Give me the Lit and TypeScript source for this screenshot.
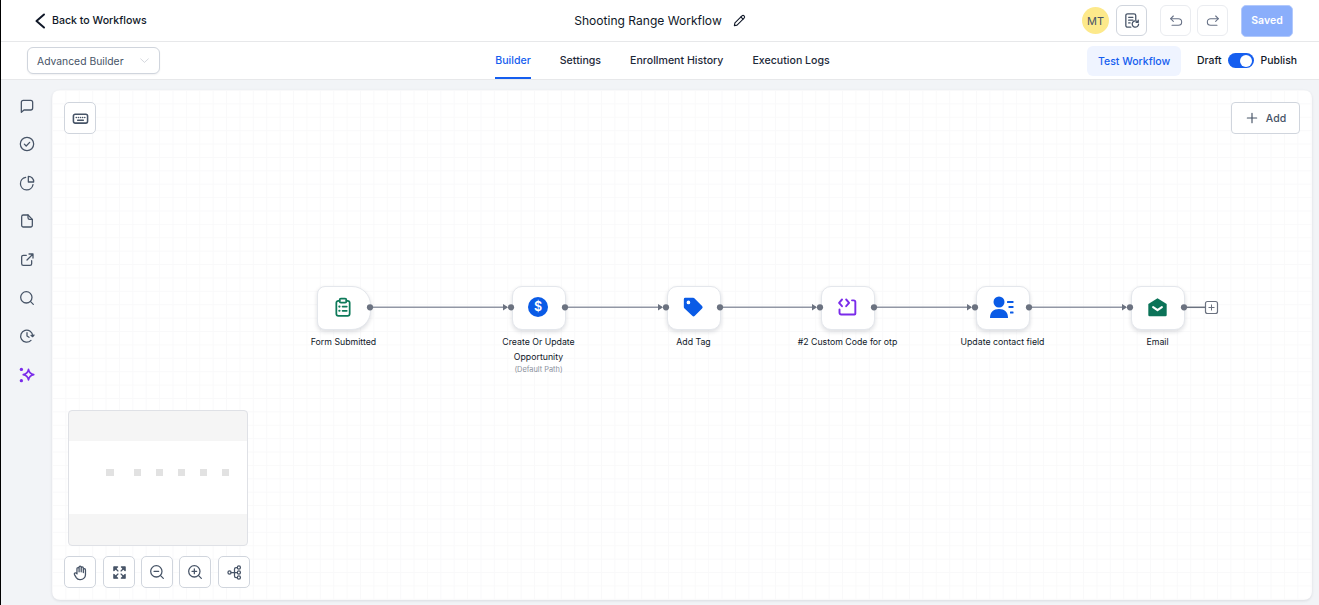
import { LitElement, html, css, svg } from "lit";
import { customElement } from "lit/decorators.js";

const ic = (body: unknown, size = 16, sw = 2) => html`<svg width=${size} height=${size} viewBox="0 0 24 24" fill="none" stroke="currentColor" stroke-width=${sw} stroke-linecap="round" stroke-linejoin="round">${body}</svg>`;

const side = [
  svg`<path d="M3.500 6.500a3 3 0 0 1 3-3h11a3 3 0 0 1 3 3v8.500a3 3 0 0 1-3 3H7.500L3.500 21.500z"/>`,
  svg`<circle cx="12" cy="12" r="10"/><path d="M8 12.200l2.800 2.800L16 9.500"/>`,
  svg`<path d="M10 3.500A9.500 9.500 0 1 0 21 14.500"/><path d="M14 2a8 8 0 0 1 8 8.500h-8z"/>`,
  svg`<path d="M13.500 3H6.500A2.500 2.500 0 0 0 4 5.500v13A2.500 2.500 0 0 0 6.500 21h11a2.500 2.500 0 0 0 2.500-2.500V9.500z"/><path d="M13.500 3v4a2.500 2.500 0 0 0 2.500 2.500h4"/>`,
  svg`<path d="M11 5H6.500A2.500 2.500 0 0 0 4 7.500v10A2.500 2.500 0 0 0 6.500 20h10a2.500 2.500 0 0 0 2.500-2.500V13"/><path d="M12 12l9-9M15 3h6v6"/>`,
  svg`<circle cx="11" cy="11" r="8.500"/><path d="M21.500 21.500l-4.500-4.500"/>`,
  svg`<path d="M20.500 12a9 9 0 1 0-2.500 6.500"/><path d="M12 7v5l3 2"/><path d="M22.500 10.500l-2 2.500-2.500-2"/>`,
];

const sparkle = html`<svg width="18" height="18" viewBox="0 0 24 24" fill="none" stroke="#7a2bea" stroke-width="2.200" stroke-linejoin="round"><path d="M14 4.500c.8 4.300 2.700 6.200 7 7-4.300.8-6.200 2.700-7 7-.8-4.300-2.700-6.200-7-7 4.300-.8 6.200-2.700 7-7z"/><circle cx="4.500" cy="4.500" r="2.200" fill="#7a2bea" stroke="none"/><circle cx="4.500" cy="19.500" r="2.200" fill="#7a2bea" stroke="none"/></svg>`;

const clipboard = html`<svg width="20" height="20" viewBox="0 0 24 24" fill="none" stroke="#0e7a5a" stroke-width="2.100" stroke-linejoin="round" stroke-linecap="round"><path d="M8 4.500H6.500A2.500 2.500 0 0 0 4 7v13a2.500 2.500 0 0 0 2.500 2.500h11A2.500 2.500 0 0 0 20 20V7a2.500 2.500 0 0 0-2.500-2.500H16"/><rect x="8" y="1.800" width="8" height="5" rx="1.500"/><path d="M11.500 11.500H16.500M11.500 16.500H16.500"/><path d="M7.600 11.500h.2M7.600 16.500h.2" stroke-width="2.600"/></svg>`;
const dollar = html`<span class="dollar">$</span>`;
const tag = html`<svg width="22" height="22" viewBox="0 0 24 24"><path fill="#0a5be6" fill-rule="evenodd" d="M2 3.500A1.500 1.500 0 0 1 3.500 2h8.700c.5 0 1 .2 1.300.5l8.400 8.400a2 2 0 0 1 0 2.800l-7.900 7.900a2 2 0 0 1-2.800 0L2.500 13.300c-.3-.3-.5-.8-.5-1.300zM7 5a2 2 0 1 0 0 4 2 2 0 0 0 0-4z"/></svg>`;
const code = html`<svg width="20" height="20" viewBox="0 0 24 24" fill="none" stroke="#7a2bea" stroke-width="2.300" stroke-linecap="round" stroke-linejoin="round"><path d="M6 3L2.500 7 6 11M11 3l3.500 4L11 11"/><path d="M18 4h2a2 2 0 0 1 2 2v14a1 1 0 0 1-1 1H5a2 2 0 0 1-2-2v-4"/></svg>`;
const contact = html`<svg width="24" height="24" viewBox="0 0 24 24" fill="#0a5be6"><circle cx="9" cy="7" r="5.500"/><path d="M0 23c0-6 3.500-9 9-9s9 3 9 9z"/><rect x="17" y="6" width="6.500" height="2" rx=".5"/><rect x="18.500" y="11" width="5" height="2" rx=".5"/><rect x="20" y="16.500" width="3.500" height="2" rx=".5"/></svg>`;
const mail = html`<svg width="21" height="21" viewBox="0 0 24 24"><path fill="#0b7358" d="M12 1.500 22.500 8v12.500a1.500 1.500 0 0 1-1.500 1.500H3a1.500 1.500 0 0 1-1.500-1.500V8z"/><path fill="none" stroke="#fff" stroke-width="2.400" stroke-linecap="round" stroke-linejoin="round" d="M7 11.500l5 3.500 5-3.500"/></svg>`;

type N = { x: number; icon: unknown; label: string[]; sub?: string; first?: boolean };
const nodes: N[] = [
  { x: 265, icon: clipboard, label: ["Form Submitted"], first: true },
  { x: 460, icon: dollar, label: ["Create Or Update", "Opportunity"], sub: "(Default Path)" },
  { x: 615, icon: tag, label: ["Add Tag"] },
  { x: 769, icon: code, label: ["#2 Custom Code for otp"] },
  { x: 924, icon: contact, label: ["Update contact field"] },
  { x: 1079, icon: mail, label: ["Email"] },
];

const NODE_W = 54;
const CY = 217.3;

@customElement("app-root")
export class AppRoot extends LitElement {
  static styles = css`
    :host { display: flex; flex-direction: column; width: 100%; height: 100vh; overflow: hidden; background: #f2f4f7; font-family: Inter, "Liberation Sans", sans-serif; color: #101828; box-sizing: border-box; border-left: 1px solid #000; }
    * { box-sizing: border-box; }
    svg { display: block; }
    .top { height: 42px; flex: none; background: #fff; border-bottom: 1px solid #e7e8ea; display: grid; grid-template-columns: 1fr auto 1fr; align-items: center; padding: 0 26px 0 33px; }
    .back { display: flex; align-items: center; gap: 6px; font-size: 10.600px; font-weight: 500; color: #101828; }
    .title { display: flex; align-items: center; gap: 11px; font-size: 12.050px; color: #101828; margin-right: 7px; }
    .actions { display: flex; align-items: center; justify-content: flex-end; }
    .avatar { width: 27px; height: 27px; border-radius: 50%; background: #fde98b; color: #475467; font-size: 11px; display: flex; align-items: center; justify-content: center; margin-right: 7px; }
    .ib { width: 31px; height: 31px; border-radius: 6px; border: 1px solid #d0d5dd; background: #fff; display: flex; align-items: center; justify-content: center; color: #475467; }
    .ib.light { border-color: #eaecf0; color: #667085; }
    .ib.doc { margin-right: 13px; }
    .ib.undo { margin-right: 6px; }
    .saved { margin-left: 13px; width: 52px; height: 32px; border-radius: 5px; background: #8aaefb; border: 1px solid #b2c9fc; color: #fff; font-size: 10.500px; font-weight: 600; display: flex; align-items: center; justify-content: center; }
    .sub { height: 38px; flex: none; background: #fff; border-bottom: 1px solid #e7e8ea; display: grid; grid-template-columns: 1fr auto 1fr; align-items: center; padding: 0 22px 0 26px; }
    .select { width: 133px; height: 27px; border: 1px solid #d0d5dd; border-radius: 6px; box-shadow: 0 1px 2px rgba(16,24,40,.06); display: flex; align-items: center; justify-content: space-between; padding: 0 8px 0 9px; font-size: 10.350px; color: #475467; background: #fff; }
    .select svg { color: #c3c7d0; }
    .tabs { display: flex; gap: 29px; height: 37px; margin-left: 1px; }
    .tab { font-size: 10.600px; font-weight: 500; color: #1d2939; display: flex; align-items: center; border-bottom: 2px solid transparent; padding-top: 1px; }
    .tab.on { color: #155eef; border-bottom-color: #155eef; }
    .right { display: flex; align-items: center; justify-content: flex-end; }
    .test { width: 94px; height: 30px; border-radius: 6px; background: #eff4ff; color: #155eef; font-size: 10.500px; font-weight: 500; display: flex; align-items: center; justify-content: center; margin-right: 16px; padding-top: 1px; }
    .sw { font-size: 10.400px; font-weight: 500; color: #101828; }
    .toggle { width: 26px; height: 15px; border-radius: 8px; background: #155eef; margin: 0 7px 0 6px; display: flex; justify-content: flex-end; align-items: center; padding: 0 1.500px; }
    .toggle i { width: 12px; height: 12px; border-radius: 50%; background: #fff; display: block; }
    .main { flex: 1; min-height: 0; display: flex; padding: 10px 7px 5px 0; }
    .rail { width: 51px; flex: none; display: flex; flex-direction: column; align-items: center; gap: 22.400px; padding: 8px 0 0 0; color: #475467; }
    .rail svg:last-child { margin-top: -1px; }
    .canvas { flex: 1; position: relative; border-radius: 8px; background-color: #fff; background-image: linear-gradient(#f9f9fa 1px, transparent 1px), linear-gradient(90deg, #f9f9fa 1px, transparent 1px); background-size: 13.400px 13.400px; box-shadow: 0 1px 3px rgba(16,24,40,.1); overflow: hidden; }
    .edges { position: absolute; inset: 0; width: 100%; height: 100%; z-index: 2; pointer-events: none; }
    .node { position: absolute; top: 196px; width: 54px; display: flex; flex-direction: column; align-items: center; }
    .box { width: 54px; height: 44px; flex: none; background: #fff; border: 1px solid #e4e7ec; border-radius: 10px; box-shadow: 0 2px 4px rgba(16,24,40,.14); display: flex; align-items: center; justify-content: center; padding: 0 2px 2px 0; }
    .box.first { border-radius: 8px 19px 19px 8px; }
    .dollar { width: 20px; height: 20px; border-radius: 50%; background: #0a5be6; color: #fff; font-size: 12.500px; font-weight: 600; display: flex; align-items: center; justify-content: center; line-height: 1; }
    .label { margin-top: 5px; width: 140px; text-align: center; font-size: 8.750px; line-height: 15px; color: #101828; flex: none; margin-left: -1px; }
    .label div { white-space: nowrap; }
    .subl { font-size: 7.400px; line-height: 10px; color: #8a909c; }
    .tool { position: absolute; width: 32px; height: 32px; border: 1px solid #d0d5dd; border-radius: 5px; background: #fff; display: flex; align-items: center; justify-content: center; color: #475467; }
    .add { position: absolute; top: 12px; right: 12px; width: 69px; height: 32px; border: 1px solid #d0d5dd; border-radius: 4px; background: #fff; display: flex; align-items: center; justify-content: center; gap: 7px; color: #475467; font-size: 10.500px; font-weight: 500; }
    .mini { position: absolute; left: 16px; top: 320px; width: 180px; height: 136px; border: 1px solid #dfe1e6; border-radius: 4px; background: #f5f5f5; overflow: hidden; display: flex; align-items: center; }
    .view { width: 100%; height: 73px; background: #fff; display: flex; align-items: flex-start; padding: 28px 0 0 37px; margin-top: -1px; }
    .pip { width: 7px; height: 7px; background: #e2e2e2; margin-right: 15px; flex: none; }
    .pip:first-child { width: 8px; margin-right: 20px; }
  `;

  render() {
    const edges = nodes.slice(0, -1).map((n, i) => {
      const a = n.x + NODE_W - 1, b = nodes[i + 1].x;
      return svg`<path d="M${a} ${CY}H${b - 5}" stroke="#9297a5" stroke-width="1.500" fill="none"/>
        <path d="M${b - 9} ${CY - 3.300}L${b - 4} ${CY}L${b - 9} ${CY + 3.300}z" fill="#6b7280"/>
        <circle cx=${a} cy=${CY} r="3.100" fill="#6b7280"/>
        <circle cx=${b - 1} cy=${CY} r="3.100" fill="#6b7280"/>`;
    });
    return html`
      <div class="top">
        <div class="back">
          <svg width="12" height="16" viewBox="0 0 12 16" fill="none" stroke="#101828" stroke-width="2" stroke-linecap="round" stroke-linejoin="round"><path d="M10 1.500 2.500 8 10 14.500"/></svg>
          <span>Back to Workflows</span>
        </div>
        <div class="title">
          <span>Shooting Range Workflow</span>
          ${ic(svg`<path d="M16.500 3.500a2.800 2.800 0 0 1 4 4L7.500 20.500 2.500 21.500l1-5z"/><path d="M14.500 5.500l4 4"/>`, 13, 2)}
        </div>
        <div class="actions">
          <div class="avatar">MT</div>
          <div class="ib doc">${ic(svg`<path d="M11 21.500H6.500A2.500 2.500 0 0 1 4 19V5a2.500 2.500 0 0 1 2.500-2.500h9A2.500 2.500 0 0 1 18 5v6"/><path d="M8 7.500h6M8 11.500h6M8 15.500h2"/><path d="M22 17a4.500 4.500 0 1 1-1.300-3.200"/><path d="M21.500 11.500v3h-3"/>`, 17, 1.800)}</div>
          <div class="ib light undo">${ic(svg`<path d="M4 8.500h11.500a5 5 0 0 1 0 10H6"/><path d="M8 4.500l-4 4 4 4"/>`, 16, 1.600)}</div>
          <div class="ib light">${ic(svg`<path d="M20 8.500H8.500a5 5 0 0 0 0 10H18"/><path d="M16 4.500l4 4-4 4"/>`, 16, 1.600)}</div>
          <div class="saved">Saved</div>
        </div>
      </div>
      <div class="sub">
        <div>
          <div class="select"><span>Advanced Builder</span>${ic(svg`<path d="M5 9l7 6.500L19 9"/>`, 13, 1.300)}</div>
        </div>
        <div class="tabs">
          <div class="tab on">Builder</div>
          <div class="tab">Settings</div>
          <div class="tab">Enrollment History</div>
          <div class="tab">Execution Logs</div>
        </div>
        <div class="right">
          <div class="test">Test Workflow</div>
          <span class="sw">Draft</span>
          <div class="toggle"><i></i></div>
          <span class="sw">Publish</span>
        </div>
      </div>
      <div class="main">
        <div class="rail">
          ${side.map((s) => ic(s, 16, 1.900))}
          ${sparkle}
        </div>
        <div class="canvas">
          <svg class="edges">
            ${edges}
            <path d="M1132 217.300H1153" stroke="#6b7280" stroke-width="1.500"/>
            <circle cx="1132" cy="217.300" r="3.100" fill="#6b7280"/>
            <rect x="1153.500" y="211.500" width="12" height="12" rx="2" fill="#fff" stroke="#6b7280" stroke-width="1.200"/>
            <path d="M1159.500 214.500v6M1156.500 217.500h6" stroke="#6b7280" stroke-width="1"/>
          </svg>
          ${nodes.map((n) => html`
            <div class="node" style="left:${n.x}px">
              <div class="box ${n.first ? "first" : ""}">${n.icon}</div>
              <div class="label">
                ${n.label.map((l) => html`<div>${l}</div>`)}
                ${n.sub ? html`<div class="subl">${n.sub}</div>` : ""}
              </div>
            </div>`)}
          <div class="tool" style="left:12px;top:12px">
            ${ic(svg`<rect x="2" y="6" width="20" height="12.500" rx="2.500"/><path d="M6 10.500h.1M9 10.500h.1M12 10.500h.1M15 10.500h.1M18 10.500h.1M8 14.500h8"/>`, 17, 2.200)}
          </div>
          <div class="add">
            ${ic(svg`<path d="M12 4v16M4 12h16"/>`, 14, 2)}
            <span>Add</span>
          </div>
          <div class="mini">
            <div class="view">${[0, 1, 2, 3, 4, 5].map(() => html`<div class="pip"></div>`)}</div>
          </div>
          <div class="tool" style="left:12px;top:466px">
            ${ic(svg`<path d="M7 13V6.500a1.500 1.500 0 0 1 3 0V11M10 11V4.500a1.500 1.500 0 0 1 3 0V11M13 11V5.500a1.500 1.500 0 0 1 3 0V12M16 12V8a1.500 1.500 0 0 1 3 0v7a7 7 0 0 1-7 7h-1a6 6 0 0 1-5-2.700L3.500 15a1.700 1.700 0 0 1 2.700-2l1 1"/>`, 17, 1.800)}
          </div>
          <div class="tool" style="left:51px;top:466px">
            ${ic(svg`<path d="M3 9V3h6zM21 9V3h-6zM3 15v6h6zM21 15v6h-6z" fill="currentColor"/><path d="M4 4l5.500 5.500M20 4l-5.500 5.500M4 20l5.500-5.500M20 20l-5.500-5.500"/>`, 15, 2)}
          </div>
          <div class="tool" style="left:89px;top:466px">
            ${ic(svg`<circle cx="11" cy="11" r="8.500"/><path d="M21.500 21.500l-4.500-4.500M7.500 11h7"/>`, 16, 1.900)}
          </div>
          <div class="tool" style="left:127px;top:466px">
            ${ic(svg`<circle cx="11" cy="11" r="8.500"/><path d="M21.500 21.500l-4.500-4.500M7.500 11h7M11 7.500v7"/>`, 16, 1.900)}
          </div>
          <div class="tool" style="left:166px;top:466px">
            ${ic(svg`<circle cx="4" cy="12" r="2.500"/><circle cx="19" cy="4" r="2.500"/><circle cx="19" cy="12" r="2.500"/><circle cx="19" cy="20" r="2.500"/><path d="M6.500 12h10M12 12V6.500A2.500 2.500 0 0 1 14.500 4h2M12 12v5.500a2.500 2.500 0 0 0 2.500 2.500h2"/>`, 15, 2)}
          </div>
        </div>
      </div>
    `;
  }
}
